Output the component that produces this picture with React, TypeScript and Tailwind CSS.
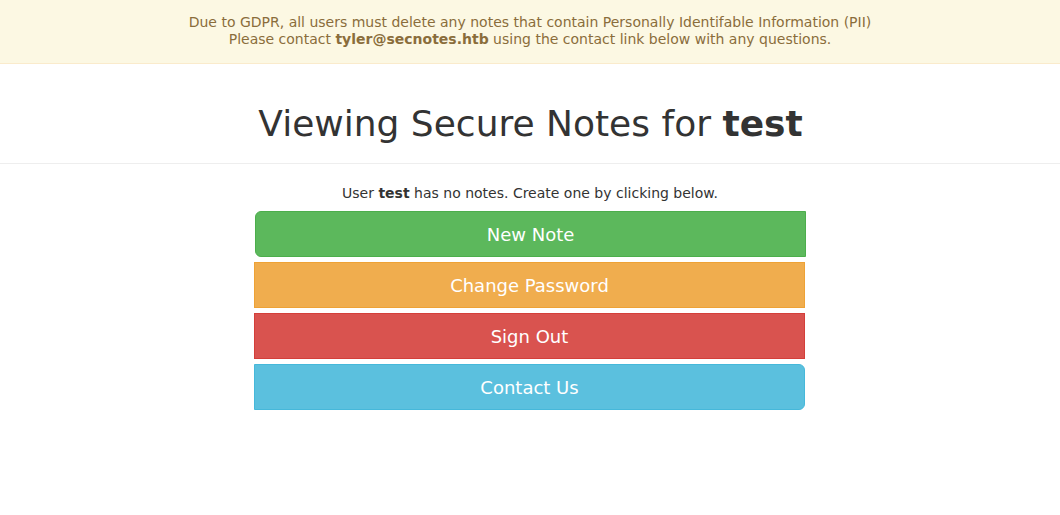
export default function App() {
  const font = { fontFamily: '"DejaVu Sans", sans-serif' };
  return (
    <div className="min-h-[515px] bg-white text-[#333]" style={font}>
      <div className="bg-[#fcf8e3] border-b border-[#faebcc] text-[#8a6d3b] text-center text-[14px] leading-[17px] pt-[14px] pb-[15px]">
        <div>Due to GDPR, all users must delete any notes that contain Personally Identifable Information (PII)</div>
        <div>
          Please contact <b>tyler@secnotes.htb</b> using the contact link below with any questions.
        </div>
      </div>

      <div className="mt-[40px] pb-[19px] border-b border-[#eee]">
        <h1 className="text-center text-[36px] leading-[40px] font-normal pl-[1px]">
          Viewing Secure Notes for <b>test</b>
        </h1>
      </div>

      <p className="text-center text-[14px] leading-[20px] mt-[19px] mb-[8px]">
        User <b>test</b> has no notes. Create one by clicking below.
      </p>

      <div className="w-[552px] mx-auto flex flex-col gap-[5px]">
        <button className="h-[46px] w-[551px] self-end bg-[#5cb85c] border border-[#4cae4c] text-white text-[18px] rounded-l-[6px]">
          New Note
        </button>
        <button className="h-[46px] w-[551px] bg-[#f0ad4e] border border-[#eea236] text-white text-[18px]">
          Change Password
        </button>
        <button className="h-[46px] w-[551px] bg-[#d9534f] border border-[#d43f3a] text-white text-[18px]">
          Sign Out
        </button>
        <button className="h-[46px] w-[551px] bg-[#5bc0de] border border-[#46b8da] text-white text-[18px] rounded-r-[6px]">
          Contact Us
        </button>
      </div>
    </div>
  );
}
